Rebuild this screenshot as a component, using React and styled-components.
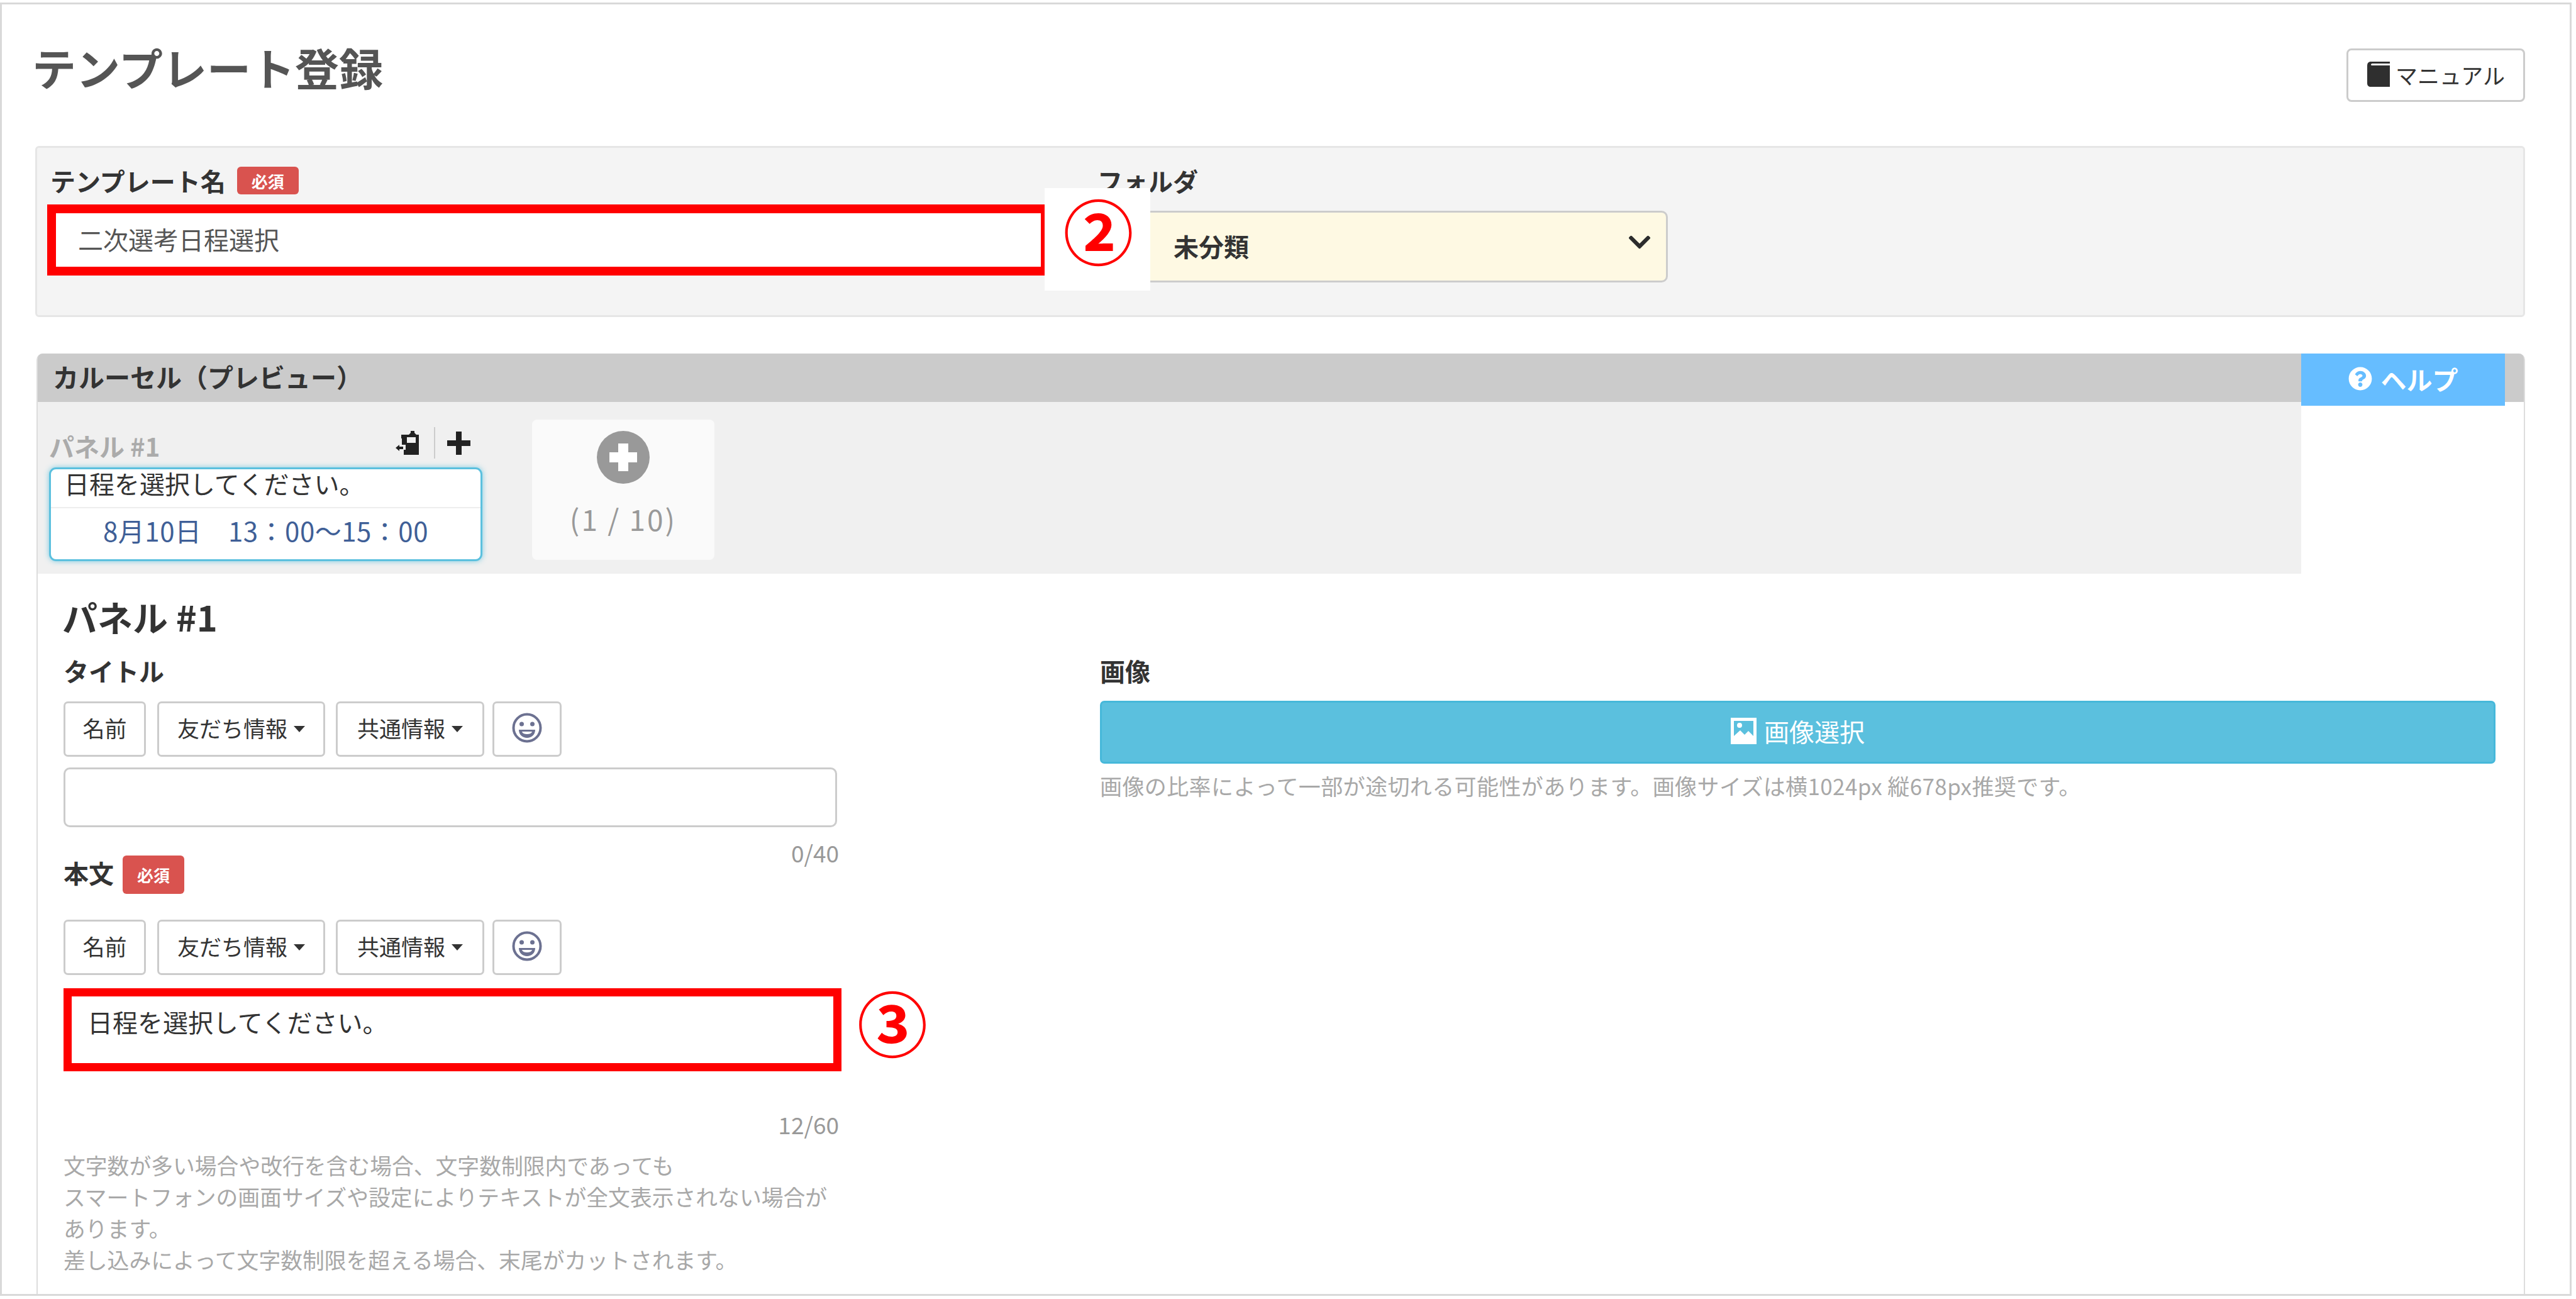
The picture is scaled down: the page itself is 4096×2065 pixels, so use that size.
import React from "react";
import styled, { createGlobalStyle } from "styled-components";
import { FaChevronDown, FaFolderOpen, FaQuestionCircle } from "react-icons/fa";

const Global = createGlobalStyle`
  html, body { margin: 0; padding: 0; background: #fff; overflow: hidden; }
  * { box-sizing: border-box; }
  body { font-family: "Noto Sans CJK JP", "Noto Sans", sans-serif; color: #333; }
`;

const Frame = styled.div`
  width: 4089px;
  height: 2056px;
  margin-top: 4px;
  border: 3px solid #d9d9d9;
  padding: 0 71px 0 53px;
  display: flex;
  flex-direction: column;
  overflow: hidden;
`;

const TitleRow = styled.header`
  height: 225px;
  padding-top: 70px;
  flex: none;
  display: flex;
  justify-content: space-between;
  align-items: flex-start;
`;

const Title = styled.h1`
  margin: -2px 0 0 -5px;
  font-size: 70px;
  line-height: 64px;
  font-weight: 700;
  color: #555;
`;

const ManualButton = styled.button`
  width: 284px;
  height: 85px;
  display: flex;
  align-items: center;
  justify-content: center;
  gap: 8px;
  background: #fff;
  border: 3px solid #ccc;
  border-radius: 8px;
  font: inherit;
  font-size: 35px;
  color: #333;
  padding: 0 0 3px;
`;

const FormPanel = styled.section`
  position: relative;
  height: 272px;
  flex: none;
  background: #f4f4f4;
  border: 3px solid #e6e6e6;
  border-radius: 6px;
  padding: 27px 0 0 16px;
  display: grid;
  grid-template-columns: 1670px 907px;
`;

const Field = styled.div`
  display: flex;
  flex-direction: column;
`;

const LabelRow = styled.div`
  display: flex;
  align-items: center;
  gap: 18px;
  height: 50px;
  padding-left: ${(p) => p.$inset || 0}px;
`;

const Label = styled.label`
  font-size: 40px;
  line-height: 50px;
  font-weight: 700;
  color: #333;
`;

const Badge = styled.span`
  display: inline-flex;
  align-items: center;
  justify-content: center;
  width: ${(p) => p.$w}px;
  height: ${(p) => p.$h}px;
  background: #d9534f;
  border-radius: 6px;
  color: #fff;
  font-size: 26px;
  font-weight: 700;
`;

const NameBox = styled.div`
  width: 1594px;
  height: 113px;
  margin-top: 13px;
  border: 14px solid #ff0000;
  background: #fff;
  padding: 0 0 3px 35px;
  display: flex;
  align-items: center;
  font-size: 40px;
  color: #555;
`;

const SelectBox = styled.div`
  height: 114px;
  margin-top: 23px;
  background: #fef9e3;
  border: 3px solid #ccc;
  border-radius: 10px;
  display: flex;
  align-items: center;
  padding: 0 22px 3px 42px;
  font-size: 40px;
  font-weight: 700;
  color: #333;
`;

const FolderIcon = styled(FaFolderOpen)`
  width: 38px;
  height: 32px;
  color: #f0c14e;
  margin-right: 38px;
`;

const Chevron = styled(FaChevronDown)`
  width: 40px;
  height: 40px;
  margin-left: auto;
  margin-top: -12px;
  color: #2c2c2c;
`;

const Callout = styled.div`
  position: absolute;
  left: 1602px;
  top: 64px;
  width: 168px;
  height: 163px;
  padding: 5px 0 0 3px;
  background: #fff;
  display: flex;
  align-items: flex-start;
  justify-content: center;
`;

const Circled = styled.span`
  font-size: 112px;
  line-height: 120px;
  font-weight: 700;
  color: #ff0000;
`;

const Card = styled.section`
  position: relative;
  flex: 1;
  min-height: 0;
  margin: 58px 0 0 2px;
  border-left: 2px solid #ddd;
  border-right: 2px solid #ddd;
  border-radius: 10px 10px 0 0;
`;

const CardHeader = styled.div`
  height: 77px;
  background: #cbcbcb;
  border-radius: 8px 8px 0 0;
  padding: 0 0 5px 24px;
  display: flex;
  align-items: center;
  font-size: 41px;
  font-weight: 700;
  color: #333;
`;

const HelpTab = styled.div`
  position: absolute;
  top: 0;
  right: 30px;
  width: 324px;
  height: 83px;
  background: #66bdff;
  color: #fff;
  padding-bottom: 4px;
  display: flex;
  align-items: center;
  justify-content: center;
  gap: 14px;
  font-size: 41px;
  font-weight: 700;
`;

const HelpIcon = styled(FaQuestionCircle)`
  width: 38px;
  height: 38px;
`;

const Strip = styled.div`
  width: 3599px;
  height: 273px;
  background: #f0f0f0;
  padding: 28px 0 0 18px;
  display: flex;
  align-items: flex-start;
  gap: 79px;
`;

const PanelItem = styled.div`
  width: 689px;
`;

const ItemHeader = styled.div`
  height: 76px;
  display: flex;
  align-items: flex-end;
  padding: 0 19px 14px 0;
`;

const ItemName = styled.span`
  font-size: 40px;
  line-height: 40px;
  font-weight: 700;
  color: #ababab;
`;

const ItemTools = styled.div`
  margin-left: auto;
  display: flex;
  align-items: center;
  height: 50px;
`;

const ToolDivider = styled.span`
  width: 2px;
  height: 50px;
  background: #ccc;
  margin: 0 19px 0 23px;
`;

const Preview = styled.div`
  height: 149px;
  background: #fff;
  border: 3px solid #5bc0de;
  border-radius: 11px;
  box-shadow: 0 0 8px rgba(91, 192, 222, 0.8);
`;

const PreviewTitle = styled.div`
  height: 62px;
  border-bottom: 2px solid #eee;
  padding-left: 21px;
  font-size: 40px;
  line-height: 44px;
  color: #333;
`;

const PreviewAction = styled.div`
  padding-top: 10px;
  text-align: center;
  font-size: 42px;
  line-height: 50px;
  letter-spacing: 0.5px;
  color: #3f5f97;
`;

const AddPanel = styled.div`
  width: 290px;
  height: 223px;
  background: #fafafa;
  border-radius: 8px;
  display: flex;
  flex-direction: column;
  align-items: center;
  padding-top: 18px;
  font-size: 46px;
  letter-spacing: 3px;
  color: #999;
`;

const AddCircle = styled.svg`
  width: 84px;
  height: 84px;
  margin-bottom: 22px;
`;

const Body = styled.div`
  padding: 38px 0 0 39px;
  display: grid;
  grid-template-columns: 1650px 2219px;
`;

const PanelHeading = styled.h2`
  grid-column: 1 / 3;
  margin: 0 0 31px;
  font-size: 56px;
  line-height: 60px;
  font-weight: 700;
  color: #333;
`;

const LeftColumn = styled.div`
  width: 1240px;
  padding-left: 2px;
`;

const Toolbar = styled.div`
  display: flex;
  height: 88px;
  margin-top: ${(p) => p.$top}px;
`;

const ToolButton = styled.button`
  width: ${(p) => p.$w}px;
  margin-right: ${(p) => p.$gap || 0}px;
  background: #fff;
  border: 3px solid #ccc;
  border-radius: 7px;
  font: inherit;
  font-size: 35px;
  color: #333;
  padding: 0 0 5px;
  display: flex;
  align-items: center;
  justify-content: center;
`;

const Caret = styled.span`
  width: 0;
  height: 0;
  margin: 5px 0 0 10px;
  border-left: 9px solid transparent;
  border-right: 9px solid transparent;
  border-top: 10px solid #333;
`;

const TextInput = styled.div`
  width: 1230px;
  height: 95px;
  margin-top: 17px;
  border: 3px solid #ccc;
  border-radius: 10px;
  background: #fff;
`;

const Counter = styled.div`
  width: 1233px;
  height: 36px;
  margin-top: ${(p) => p.$top}px;
  margin-bottom: ${(p) => p.$bottom || 0}px;
  text-align: right;
  font-size: 37px;
  line-height: 36px;
  color: #999;
`;

const BodyLabelRow = styled.div`
  display: flex;
  align-items: center;
  gap: 14px;
  height: 61px;
`;

const BodyLabel = styled(Label)`
  margin-top: -8px;
`;

const BodyBox = styled.div`
  position: relative;
  width: 1237px;
  height: 132px;
  margin-top: 21px;
  border: 13px solid #ff0000;
  background: #fff;
  padding: 15px 0 0 25px;
  font-size: 40px;
  line-height: 50px;
  color: #333;
`;

const BodyCallout = styled(Circled)`
  position: absolute;
  left: calc(100% + 38px);
  top: -21px;
`;

const HelpText = styled.p`
  width: 1233px;
  margin: 22px 0 0;
  font-size: 34.8px;
  line-height: 50px;
  color: #a8a8a8;
`;

const RightColumn = styled.div`
  display: flex;
  flex-direction: column;
`;

const ImageButton = styled.button`
  height: 100px;
  margin-top: 23px;
  background: #5bc0de;
  border: 3px solid #46b8da;
  border-radius: 7px;
  color: #fff;
  font: inherit;
  font-size: 40px;
  display: flex;
  align-items: center;
  justify-content: center;
  gap: 12px;
  padding: 0 0 5px;
`;

const ImageNote = styled.p`
  margin: 10px 0 0;
  font-size: 35px;
  line-height: 50px;
  letter-spacing: 0.4px;
  color: #a8a8a8;
`;

const Icon = styled.svg`
  width: ${(p) => p.$w}px;
  height: ${(p) => p.$h}px;
  flex: none;
`;

const BookIcon = () => (
  <Icon $w={38} $h={40} viewBox="0 0 38 40">
    <path d="M1 7C1 2 3 0 7 0h30v3H10C7 3 6 5 8 6h29v34H7c-4 0-6-2-6-6z" fill="#2f2f2f" />
  </Icon>
);

const PictureIcon = () => (
  <Icon $w={41} $h={42} viewBox="0 0 41 42">
    <path fillRule="evenodd" d="M0 0h41v42H0zM5 5v24l10-9 7 7 6-6 8 8V5z" fill="#fff" />
    <circle cx="14" cy="12" r="4" fill="#fff" />
  </Icon>
);

const ClipMoveIcon = () => (
  <Icon $w={38} $h={38} viewBox="0 0 38 38">
    <path
      fillRule="evenodd"
      d="M9 6h12l3-3V0h6v3l3 3h4v32H13v-8h3V22h-6V12h-1zM18 10v9h14V10z"
      fill="#222"
    />
    <path d="M0 27l6-5v3h6v4H6v3z" fill="#222" />
  </Icon>
);

const PlusIcon = () => (
  <Icon $w={37} $h={37} viewBox="0 0 37 37">
    <path d="M14 0h9v14h14v9H23v14h-9V23H0v-9h14z" fill="#222" />
  </Icon>
);

const SmileIcon = () => (
  <Icon $w={48} $h={48} viewBox="0 0 48 48">
    <circle cx="24" cy="24" r="21.5" fill="none" stroke="#6c7191" strokeWidth="4" />
    <circle cx="15.5" cy="18" r="3.5" fill="#6c7191" />
    <circle cx="32.5" cy="18" r="3.5" fill="#6c7191" />
    <path d="M11 27h26c0 8-6 13-13 13s-13-5-13-13z" fill="#6c7191" />
    <path d="M16 30h16c-1 3-4 4-8 4s-7-1-8-4z" fill="#fff" />
  </Icon>
);

const InsertTools = ({ top }) => (
  <Toolbar $top={top}>
    <ToolButton $w={131} $gap={18}>名前</ToolButton>
    <ToolButton $w={267} $gap={17}>友だち情報<Caret /></ToolButton>
    <ToolButton $w={236} $gap={13}>共通情報<Caret /></ToolButton>
    <ToolButton $w={110}><SmileIcon /></ToolButton>
  </Toolbar>
);

export default function App() {
  return (
    <>
      <Global />
      <Frame>
        <TitleRow>
          <Title>テンプレート登録</Title>
          <ManualButton><BookIcon />マニュアル</ManualButton>
        </TitleRow>

        <FormPanel>
          <Field>
            <LabelRow $inset={5}>
              <Label>テンプレート名</Label>
              <Badge $w={98} $h={44}>必須</Badge>
            </LabelRow>
            <NameBox>二次選考日程選択</NameBox>
          </Field>
          <Field>
            <LabelRow><Label>フォルダ</Label></LabelRow>
            <SelectBox>
              <FolderIcon />
              未分類
              <Chevron />
            </SelectBox>
          </Field>
          <Callout><Circled>②</Circled></Callout>
        </FormPanel>

        <Card>
          <CardHeader>カルーセル（プレビュー）</CardHeader>
          <HelpTab><HelpIcon />ヘルプ</HelpTab>
          <Strip>
            <PanelItem>
              <ItemHeader>
                <ItemName>パネル #1</ItemName>
                <ItemTools>
                  <ClipMoveIcon />
                  <ToolDivider />
                  <PlusIcon />
                </ItemTools>
              </ItemHeader>
              <Preview>
                <PreviewTitle>日程を選択してください。</PreviewTitle>
                <PreviewAction>8月10日　13：00～15：00</PreviewAction>
              </Preview>
            </PanelItem>
            <AddPanel>
              <AddCircle viewBox="0 0 84 84">
                <circle cx="42" cy="42" r="42" fill="#999" />
                <path d="M34 20h16v14h14v16H50v14H34V50H20V34h14z" fill="#fff" />
              </AddCircle>
              (1 / 10)
            </AddPanel>
          </Strip>
          <Body>
            <PanelHeading>パネル #1</PanelHeading>
            <LeftColumn>
              <LabelRow><Label>タイトル</Label></LabelRow>
              <InsertTools top={24} />
              <TextInput />
              <Counter $top={22} $bottom={-13}>0/40</Counter>
              <BodyLabelRow>
                <BodyLabel>本文</BodyLabel>
                <Badge $w={98} $h={61}>必須</Badge>
              </BodyLabelRow>
              <InsertTools top={41} />
              <BodyBox>
                日程を選択してください。
                <BodyCallout>③</BodyCallout>
              </BodyBox>
              <Counter $top={66}>12/60</Counter>
              <HelpText>
                文字数が多い場合や改行を含む場合、文字数制限内であっても<br />
                スマートフォンの画面サイズや設定によりテキストが全文表示されない場合があります。<br />
                差し込みによって文字数制限を超える場合、末尾がカットされます。
              </HelpText>
            </LeftColumn>
            <RightColumn>
              <LabelRow><Label>画像</Label></LabelRow>
              <ImageButton><PictureIcon />画像選択</ImageButton>
              <ImageNote>画像の比率によって一部が途切れる可能性があります。画像サイズは横1024px 縦678px推奨です。</ImageNote>
            </RightColumn>
          </Body>
        </Card>
      </Frame>
    </>
  );
}
